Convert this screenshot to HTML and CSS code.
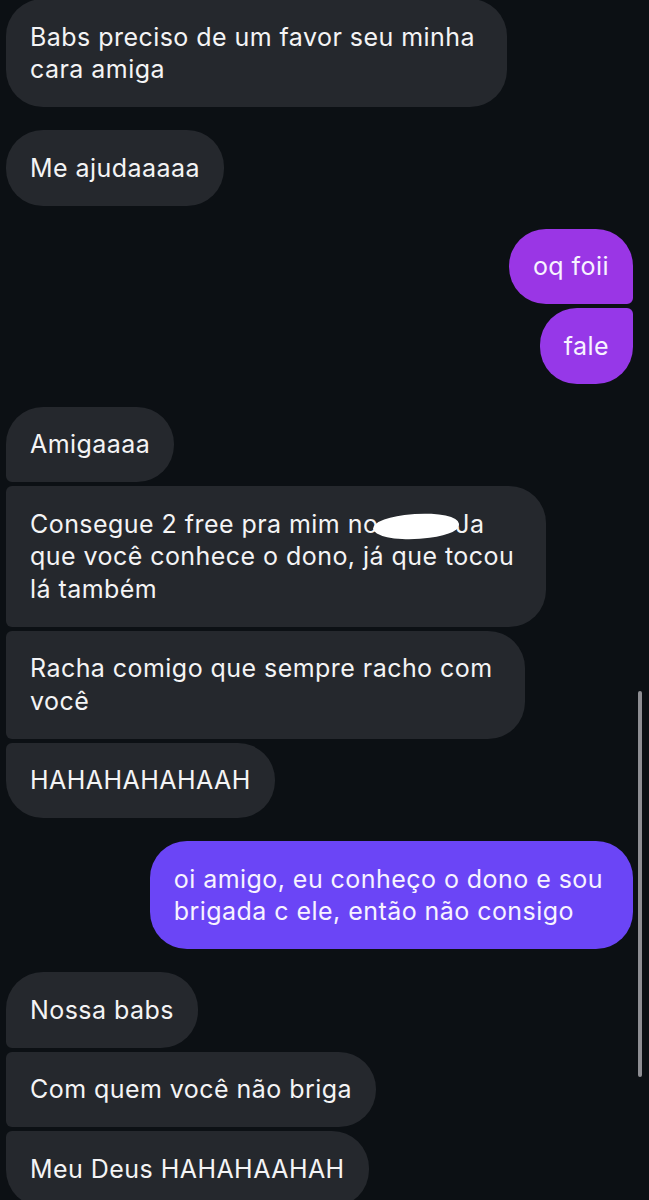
FILE: index.html
```html
<!DOCTYPE html>
<html lang="pt-BR">
<head>
  <meta charset="UTF-8">
  <meta name="viewport" content="width=device-width, initial-scale=1.0">
  <title>Conversa</title>
  <link rel="stylesheet" href="styles.css">
</head>
<body>
  <div class="thread">
    <div class="group">
      <div class="bubble in wrap">Babs preciso de um favor seu minha<br>cara amiga</div>
    </div>

    <div class="group">
      <div class="bubble in">Me ajudaaaaa</div>
    </div>

    <div class="group out-group">
      <div class="bubble out first tone-1">oq foii</div>
      <div class="bubble out last tone-2">fale</div>
    </div>

    <div class="group">
      <div class="bubble in first">Amigaaaa</div>
      <div class="bubble in mid wrap">Consegue 2 free pra mim no<span class="scribble"></span>Ja<br>que você conhece o dono, já que tocou<br>lá também</div>
      <div class="bubble in mid wrap">Racha comigo que sempre racho com<br>você</div>
      <div class="bubble in last">HAHAHAHAHAAH</div>
    </div>

    <div class="group out-group">
      <div class="bubble out tone-3">oi amigo, eu conheço o dono e sou<br>brigada c ele, então não consigo</div>
    </div>

    <div class="group">
      <div class="bubble in first">Nossa babs</div>
      <div class="bubble in mid">Com quem você não briga</div>
      <div class="bubble in last">Meu Deus HAHAHAAHAH</div>
    </div>
  </div>

  <div class="scrollbar"></div>
</body>
</html>
```

FILE: styles.css
```css
body {
  margin: 0;
  background: #0c1014;
  font-family: Inter, "Noto Sans", sans-serif;
  color: #f4f4f5;
  overflow: hidden;
}

.thread {
  display: flex;
  flex-direction: column;
  gap: 23px;
  padding: 0 16px 0 6px;
  margin-top: -1px;
}

.group {
  display: flex;
  flex-direction: column;
  align-items: flex-start;
  gap: 4px;
}

.out-group {
  align-items: flex-end;
}

.bubble {
  font-size: 25px;
  letter-spacing: 0.45px;
  line-height: 32.5px;
  padding: 21.5px 24px;
  border-radius: 37px;
  white-space: nowrap;
}

.in {
  background: #25282d;
}

/* wrapped messages keep a wider right edge */
.in.wrap {
  padding-right: 32px;
}

.out {
  color: #f7f3ff;
}

.tone-1 {
  background: #9a36e5;
}

.tone-2 {
  background: #9638e8;
}

.tone-3 {
  background: #6b45f6;
  padding-right: 30px;
}

.in.first {
  border-bottom-left-radius: 6px;
}

.in.mid {
  border-top-left-radius: 6px;
  border-bottom-left-radius: 6px;
}

.in.last {
  border-top-left-radius: 6px;
}

.out.first {
  border-bottom-right-radius: 6px;
}

.out.last {
  border-top-right-radius: 6px;
}

.scribble {
  display: inline-block;
  width: 86px;
  height: 25px;
  margin: 0 -4px 0 -5px;
  background: #fff;
  border-radius: 48% 52% 45% 55%;
  vertical-align: -6px;
  transform: rotate(-4deg);
}

.scrollbar {
  position: absolute;
  top: 691px;
  right: 7px;
  width: 4px;
  height: 386px;
  border-radius: 2px;
  background: #8e8e93;
}
```
